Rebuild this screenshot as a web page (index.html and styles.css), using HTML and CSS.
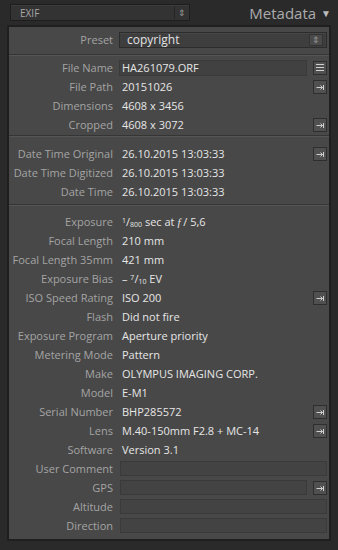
FILE: index.html
```html
<!DOCTYPE html>
<html lang="en">
<head>
    <meta charset="UTF-8">
    <title>Metadata</title>
    <link rel="stylesheet" href="styles.css">
</head>
<body>
    <div class="panel-header">
        <div class="set-select">
            <span>EXIF</span>
            <span class="spin">&#8661;</span>
        </div>
        <div class="panel-title">Metadata <span class="caret">&#9660;</span></div>
    </div>

    <div class="meta-panel">
        <div class="section preset-section">
            <div class="row">
                <span class="label">Preset</span>
                <div class="preset-select">
                    <span>copyright</span>
                    <span class="spin">&#8661;</span>
                </div>
            </div>
        </div>

        <div class="section first">
            <div class="row">
                <span class="label">File Name</span>
                <span class="value boxed">HA261079.ORF</span>
                <span class="btn btn-list"><i></i><i></i><i></i></span>
            </div>
            <div class="row">
                <span class="label">File Path</span>
                <span class="value">20151026</span>
                <span class="btn"><svg viewBox="0 0 12 12"><path d="M2.5 6.5h6M6.5 4.5l2 2-2 2M9.5 4v5"/></svg></span>
            </div>
            <div class="row">
                <span class="label">Dimensions</span>
                <span class="value">4608 x 3456</span>
            </div>
            <div class="row">
                <span class="label">Cropped</span>
                <span class="value">4608 x 3072</span>
                <span class="btn"><svg viewBox="0 0 12 12"><path d="M2.5 6.5h6M6.5 4.5l2 2-2 2M9.5 4v5"/></svg></span>
            </div>
        </div>

        <div class="section dates">
            <div class="row">
                <span class="label">Date Time Original</span>
                <span class="value">26.10.2015 13:03:33</span>
                <span class="btn"><svg viewBox="0 0 12 12"><path d="M2.5 6.5h6M6.5 4.5l2 2-2 2M9.5 4v5"/></svg></span>
            </div>
            <div class="row">
                <span class="label">Date Time Digitized</span>
                <span class="value">26.10.2015 13:03:33</span>
            </div>
            <div class="row">
                <span class="label">Date Time</span>
                <span class="value">26.10.2015 13:03:33</span>
            </div>
        </div>

        <div class="section last">
            <div class="row">
                <span class="label">Exposure</span>
                <span class="value"><sup>1</sup>/<sub>800</sub> sec at <i class="f">f</i> / 5,6</span>
            </div>
            <div class="row">
                <span class="label">Focal Length</span>
                <span class="value">210 mm</span>
            </div>
            <div class="row">
                <span class="label">Focal Length 35mm</span>
                <span class="value">421 mm</span>
            </div>
            <div class="row">
                <span class="label">Exposure Bias</span>
                <span class="value">&#8211; <sup>7</sup>/<sub>10</sub> EV</span>
            </div>
            <div class="row">
                <span class="label">ISO Speed Rating</span>
                <span class="value">ISO 200</span>
                <span class="btn"><svg viewBox="0 0 12 12"><path d="M2.5 6.5h6M6.5 4.5l2 2-2 2M9.5 4v5"/></svg></span>
            </div>
            <div class="row">
                <span class="label">Flash</span>
                <span class="value">Did not fire</span>
            </div>
            <div class="row">
                <span class="label">Exposure Program</span>
                <span class="value">Aperture priority</span>
            </div>
            <div class="row">
                <span class="label">Metering Mode</span>
                <span class="value">Pattern</span>
            </div>
            <div class="row">
                <span class="label">Make</span>
                <span class="value">OLYMPUS IMAGING CORP.</span>
            </div>
            <div class="row">
                <span class="label">Model</span>
                <span class="value">E-M1</span>
            </div>
            <div class="row">
                <span class="label">Serial Number</span>
                <span class="value">BHP285572</span>
                <span class="btn"><svg viewBox="0 0 12 12"><path d="M2.5 6.5h6M6.5 4.5l2 2-2 2M9.5 4v5"/></svg></span>
            </div>
            <div class="row">
                <span class="label">Lens</span>
                <span class="value">M.40-150mm F2.8 + MC-14</span>
                <span class="btn"><svg viewBox="0 0 12 12"><path d="M2.5 6.5h6M6.5 4.5l2 2-2 2M9.5 4v5"/></svg></span>
            </div>
            <div class="row">
                <span class="label">Software</span>
                <span class="value">Version 3.1</span>
            </div>
            <div class="row">
                <span class="label">User Comment</span>
                <span class="field wide"></span>
            </div>
            <div class="row">
                <span class="label">GPS</span>
                <span class="field"></span>
                <span class="btn"><svg viewBox="0 0 12 12"><path d="M2.5 6.5h6M6.5 4.5l2 2-2 2M9.5 4v5"/></svg></span>
            </div>
            <div class="row">
                <span class="label">Altitude</span>
                <span class="field wide"></span>
            </div>
            <div class="row">
                <span class="label">Direction</span>
                <span class="field wide"></span>
            </div>
        </div>
    </div>
</body>
</html>
```

FILE: styles.css
```css
* {
    margin: 0;
    padding: 0;
    box-sizing: border-box;
}

body {
    background-color: #2a2a2a;
    font-family: "Open Sans", "Liberation Sans", sans-serif;
    font-size: 11px;
    width: 338px;
    height: 550px;
    padding: 3px 7px 0 7px;
}

.panel-header {
    display: flex;
    align-items: center;
    justify-content: space-between;
    height: 19px;
    margin-bottom: 3px;
}

.set-select {
    width: 180px;
    height: 17px;
    margin-left: 3px;
    background: #333;
    border: 1px solid #1e1e1e;
    box-shadow: inset 0 1px 0 #3c3c3c;
    display: flex;
    align-items: center;
    justify-content: space-between;
    padding: 0 3px 0 9px;
    color: #a8a8a8;
    font-size: 10px;
}

.spin {
    font-size: 9px;
    color: #9a9a9a;
    border-left: 1px solid #262626;
    padding-left: 3px;
}

.panel-title {
    color: #acacac;
    font-size: 15px;
    display: flex;
    align-items: center;
}

.caret {
    font-size: 10px;
    margin-left: 5px;
    color: #bdbdbd;
}

.meta-panel {
    background: #484848;
    border: 2px solid #1f1f1f;
    height: 516px;
}

.section {
    border-bottom: 1px solid #353535;
    box-shadow: 0 1px 0 #555;
}

.preset-section {
    padding: 3px 0 5px;
}

.section.first {
    padding: 3px 0 1px;
}

.section.dates {
    padding: 8px 0 3px;
}

.section.last {
    border-bottom: none;
    box-shadow: none;
    padding-top: 7px;
}

.row {
    display: grid;
    grid-template-columns: 104px 1fr 14px;
    column-gap: 6px;
    align-items: center;
    height: 19px;
    padding-right: 2px;
}

.label {
    text-align: right;
    color: #a4a4a4;
    white-space: nowrap;
}

.value {
    color: #e6e6e6;
    white-space: nowrap;
    padding-left: 3px;
}

.value sup,
.value sub {
    font-size: 7px;
    line-height: 0;
}

.value sup {
    vertical-align: 3px;
}

.value sub {
    vertical-align: -1px;
}

.value .f {
    font-family: "Liberation Serif", serif;
    font-style: italic;
}

.boxed {
    background: #414141;
    border: 1px solid #3a3a3a;
    height: 16px;
    line-height: 14px;
    padding-left: 2px;
}

.preset-select {
    grid-column: 2 / 4;
    height: 16px;
    background: #3e3e3e;
    border: 1px solid #2c2c2c;
    box-shadow: inset 0 1px 0 #474747;
    display: flex;
    align-items: center;
    justify-content: space-between;
    padding: 0 3px 0 7px;
    color: #e2e2e2;
    font-size: 12px;
}

.preset-select .spin {
    background: #4a4a4a;
    border: 1px solid #333;
    padding: 0 2px;
    line-height: 10px;
}

.btn {
    grid-column: 3;
    width: 14px;
    height: 14px;
    border: 1px solid #2e2e2e;
    background: #505050;
    display: flex;
    align-items: center;
    justify-content: center;
}

.btn svg {
    width: 12px;
    height: 12px;
    fill: none;
    stroke: #cfcfcf;
    stroke-width: 1;
}

.btn-list {
    flex-direction: column;
    align-items: stretch;
    gap: 2px;
    padding: 0 2px;
}

.btn-list i {
    display: block;
    height: 1px;
    background: #cfcfcf;
}

.field {
    height: 15px;
    background: #434343;
    border: 1px solid #3a3a3a;
    margin-left: 1px;
}

.field.wide {
    grid-column: 2 / 4;
}
```
